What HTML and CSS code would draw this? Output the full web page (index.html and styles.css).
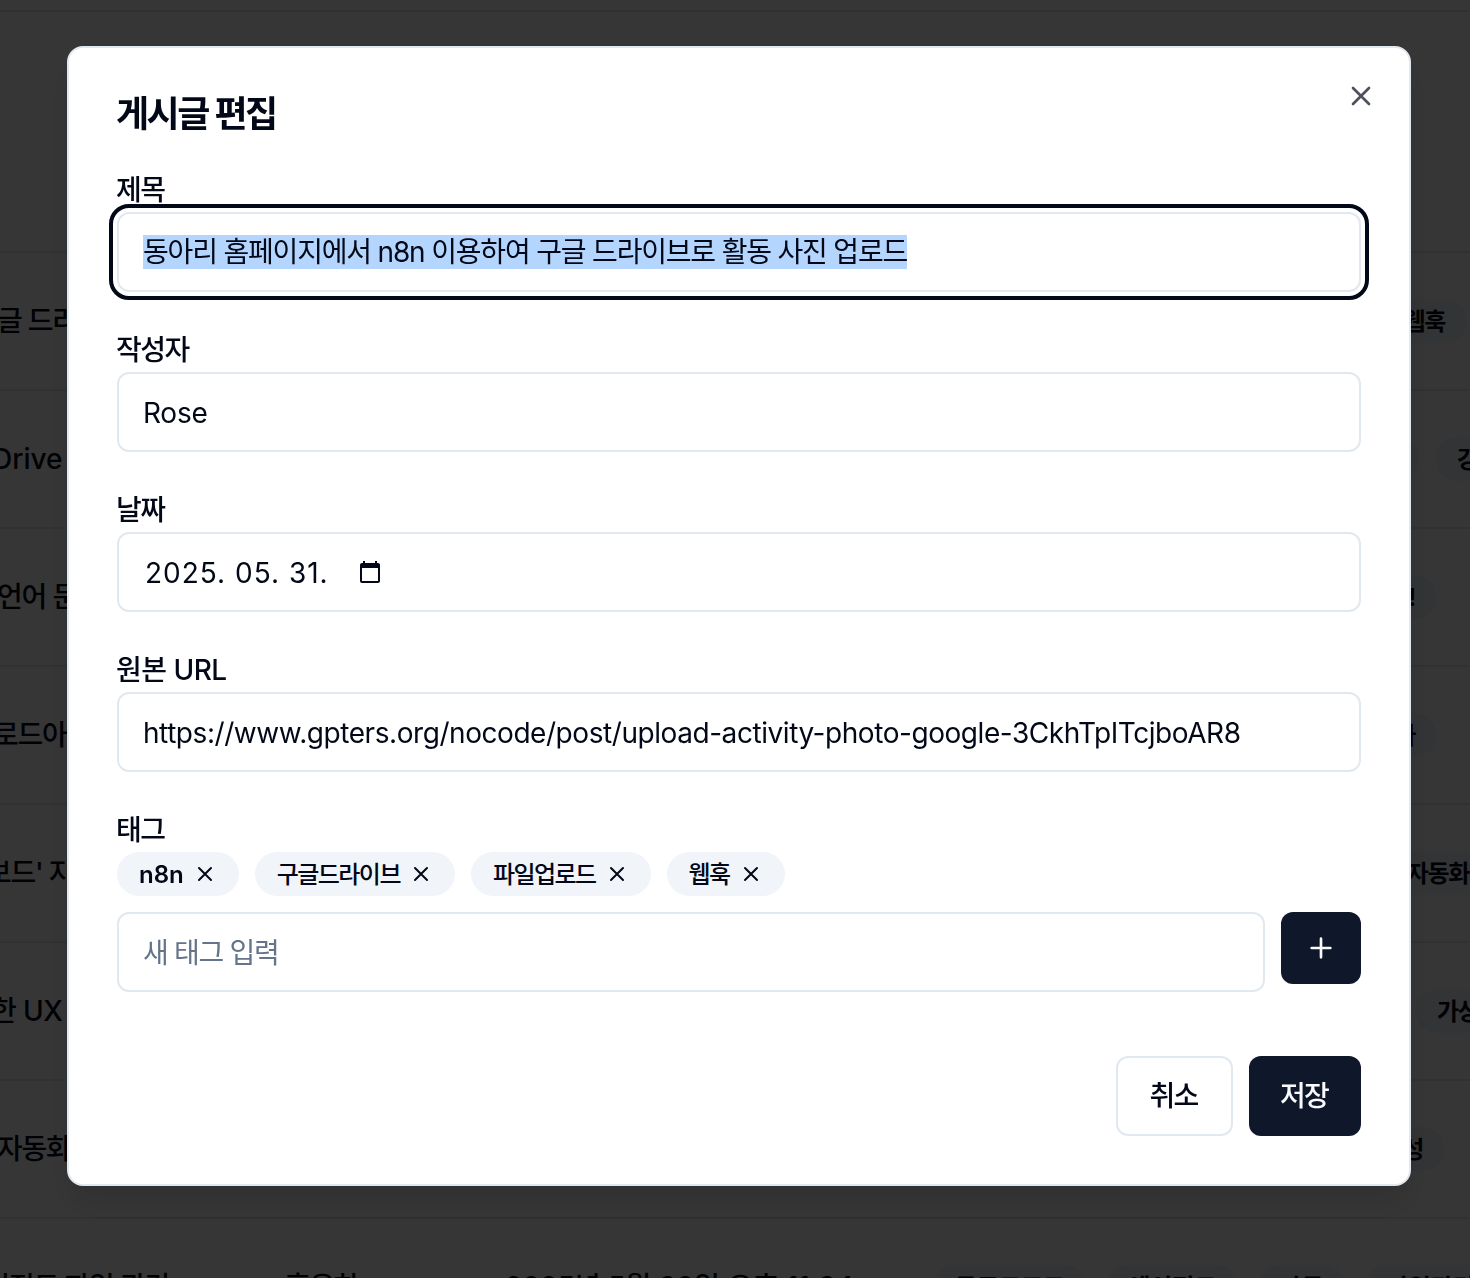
FILE: index.html
```html
<!DOCTYPE html>
<html lang="ko">
<head>
<meta charset="utf-8">
<title>게시글 편집</title>
<link rel="stylesheet" href="styles.css">
</head>
<body>
<main class="page">
  <div class="row row-top"></div>
  <div class="row row-tall"></div>
  <div class="row r2"><div class="t">글 드라이브로 활동 사진 업로드</div><div class="tags"><span class="pill">n8n</span><span class="pill">구글드라이브</span><span class="pill">파일업로드</span><span class="pill">웹훅</span></div></div>
  <div class="row r3"><div class="t">Drive 이미지 저장</div><div class="tags"><span class="pill">자동화</span><span class="pill">강의자료</span></div></div>
  <div class="row r4"><div class="t">언어 문서 정리</div><div class="tags"><span class="pill">프롬프트!</span></div></div>
  <div class="row r5"><div class="t">로드아웃 정리</div><div class="tags"><span class="pill">자료공유하</span></div></div>
  <div class="row r6"><div class="t">보드' 자동화</div><div class="tags"><span class="pill">자동화</span></div></div>
  <div class="row r7"><div class="t">한 UX 개선</div><div class="tags"><span class="pill">가상환경</span></div></div>
  <div class="row r8"><div class="t">자동화 구성</div><div class="tags"><span class="pill">에이전트 구성</span></div></div>
  <div class="row r9"><div class="t">에이전트 파일 관리</div><div class="author">홍은하</div><div class="date">2025년 5월 30일 오후 11:34</div><div class="tags"><span class="pill">클로드코드</span><span class="pill">에이전트</span><span class="pill">자동</span><span class="pill">파일관리</span></div></div>
</main>
<div class="overlay"></div>
<section class="modal" role="dialog" aria-label="게시글 편집">
  <h2 class="modal-title">게시글 편집</h2>
  <button class="close" aria-label="닫기"><svg viewBox="0 0 24 24" class="close-icon"><path d="M18 6 6 18M6 6l12 12"/></svg></button>
  <form class="form">
    <div class="field">
      <label class="label">제목</label>
      <div class="input focused" role="textbox"><span class="selected">동아리 홈페이지에서 n8n 이용하여 구글 드라이브로 활동 사진 업로드</span></div>
    </div>
    <div class="field">
      <label class="label">작성자</label>
      <input class="input latin-short" value="Rose">
    </div>
    <div class="field">
      <label class="label">날짜</label>
      <div class="input date-input" role="textbox"><span class="date-text">2025. 05. 31.</span><svg class="cal" viewBox="0 0 24 24"><path class="cal-fill" d="M20 3h-1V1h-2v2H7V1H5v2H4c-1.100 0-2 .9-2 2v16c0 1.100.9 2 2 2h16c1.100 0 2-.9 2-2V5c0-1.100-.9-2-2-2zm0 18H4V8h16v13z"/></svg></div>
    </div>
    <div class="field">
      <label class="label label-mixed">원본 URL</label>
      <input class="input latin-long" value="https://www.gpters.org/nocode/post/upload-activity-photo-google-3CkhTpITcjboAR8">
    </div>
    <div class="field">
      <label class="label">태그</label>
      <div class="tag-list">
        <span class="tag"><span class="tag-text tag-latin">n8n</span><svg viewBox="0 0 24 24" class="tag-x"><path d="M18 6 6 18M6 6l12 12"/></svg></span>
        <span class="tag"><span class="tag-text">구글드라이브</span><svg viewBox="0 0 24 24" class="tag-x"><path d="M18 6 6 18M6 6l12 12"/></svg></span>
        <span class="tag"><span class="tag-text">파일업로드</span><svg viewBox="0 0 24 24" class="tag-x"><path d="M18 6 6 18M6 6l12 12"/></svg></span>
        <span class="tag"><span class="tag-text">웹훅</span><svg viewBox="0 0 24 24" class="tag-x"><path d="M18 6 6 18M6 6l12 12"/></svg></span>
      </div>
      <div class="tag-add">
        <input class="input grow tag-input" placeholder="새 태그 입력">
        <button type="button" class="add" aria-label="추가"><svg viewBox="0 0 24 24" class="plus"><path d="M5 12h14M12 5v14"/></svg></button>
      </div>
    </div>
    <div class="actions">
      <button type="button" class="btn ghost">취소</button>
      <button type="button" class="btn primary">저장</button>
    </div>
  </form>
</section>
</body>
</html>
```
FILE: styles.css
```css
* { box-sizing: border-box; }
html, body { margin: 0; height: 100%; overflow: hidden; }
body { font-family: Inter, "Noto Sans CJK KR", sans-serif; background: #fff; color: #020817; }
.page { height: 1278px; overflow: hidden; }
.row { display: flex; align-items: center; height: 138px; border-bottom: 2px solid #e2e8f0; font-size: 28px; font-weight: 500; white-space: nowrap; }
.row-top { height: 12px; }
.row-tall { height: 241px; }
.t { width: 260px; flex: none; padding-bottom: 4px; letter-spacing: -1.2px; }
.r2 .t { margin-left: -3px; }
.r3 .t { margin-left: -8px; letter-spacing: 0; }
.r4 .t { margin-left: -3px; }
.r5 .t { margin-left: -7px; }
.r6 .t { margin-left: -14px; }
.r7 .t { margin-left: -9px; letter-spacing: -.6px; }
.r8 .t { margin-left: -3px; }
.r9 .t { margin-left: -40px; width: 325px; }
.author { width: 220px; flex: none; padding-bottom: 4px; letter-spacing: -1.2px; }
.date { flex: none; padding-bottom: 4px; }
.tags { margin-left: auto; display: flex; gap: 16px; flex: none; }
.r2 .tags { margin-right: 3px; }
.r3 .tags { margin-right: -92px; }
.r4 .tags { margin-right: 33px; }
.r5 .tags { margin-right: 33px; }
.r6 .tags { margin-right: -21px; }
.r7 .tags { margin-right: -72px; }
.r8 .tags { margin-right: 25px; }
.r9 .tags { margin-right: -27px; gap: 19px; }
.pill { display: flex; align-items: center; height: 44px; padding: 0 22px 3px; border-radius: 22px; background: #f1f5f9; font-size: 24px; font-weight: 600; letter-spacing: -1.3px; }
.r9 .pill { letter-spacing: 0; }
.overlay { position: fixed; inset: 0; background: rgba(0, 0, 0, .79); }
.modal { position: fixed; left: 67px; top: 46px; width: 1344px; height: 1140px; padding: 48px; background: #fff; border: 2px solid #e2e8f0; border-radius: 16px; box-shadow: 0 20px 30px rgba(0, 0, 0, .1); }
.modal-title { margin: 0 0 0 -1px; font-size: 36px; line-height: 36px; font-weight: 600; letter-spacing: -2.5px; color: #020817; }
.close { position: absolute; top: 32px; right: 32px; width: 32px; height: 32px; padding: 0; border: 0; background: none; opacity: .7; }
.close-icon { display: block; width: 32px; height: 32px; fill: none; stroke: #020817; stroke-width: 2; stroke-linecap: round; stroke-linejoin: round; }
.form { display: flex; flex-direction: column; gap: 32px; margin-top: 32px; }
.field { display: flex; flex-direction: column; gap: 8px; }
.label { display: block; height: 40px; margin-left: -1px; line-height: 53px; font-size: 28px; font-weight: 500; letter-spacing: -1.5px; }
.label-mixed { letter-spacing: -.5px; }
.input { display: block; width: 100%; height: 80px; padding: 0 24px; border: 2px solid #e2e8f0; border-radius: 12px; background: #fff; color: #020817; font: 400 28px Inter, "Noto Sans CJK KR", sans-serif; line-height: 76px; outline: 0; }
.latin-short { padding-top: 2px; letter-spacing: -.25px; }
.latin-long { padding-top: 2px; letter-spacing: -.44px; }
.tag-input { padding-top: 2px; letter-spacing: -1.3px; }
.input::placeholder { color: #64748b; opacity: 1; }
.focused { display: flex; align-items: center; outline: 4px solid #020817; outline-offset: 4px; }
.selected { line-height: 34px; background: #b4d5fe; white-space: nowrap; letter-spacing: -1.18px; }
.date-input { display: flex; align-items: center; padding-left: 26px; padding-top: 1px; }
.date-text { width: 213px; letter-spacing: 1px; }
.cal { width: 24px; height: 24px; margin-top: -1px; }
.cal-fill { fill: #020817; }
.tag-list { display: flex; gap: 16px; }
.tag { display: flex; align-items: center; gap: 9px; height: 44px; padding: 0 22px; border-radius: 22px; background: #f1f5f9; font-size: 24px; font-weight: 500; }
.tag-text { margin-top: -3px; letter-spacing: -1.55px; }
.tag-latin { margin-top: 0; letter-spacing: 0; font-weight: 600; }
.tag-x { width: 24px; height: 24px; fill: none; stroke: #020817; stroke-width: 2; stroke-linecap: round; stroke-linejoin: round; }
.tag-add { display: flex; gap: 16px; margin-top: 8px; align-items: flex-start; }
.grow { flex: 1; min-width: 0; }
.add { display: flex; align-items: center; justify-content: center; width: 80px; height: 72px; padding: 0; border: 0; border-radius: 12px; background: #0f172a; }
.plus { width: 32px; height: 32px; fill: none; stroke: #f8fafc; stroke-width: 2; stroke-linecap: round; }
.actions { display: flex; justify-content: flex-end; gap: 16px; margin-top: 32px; }
.btn { height: 80px; padding: 0 2px 4px 0; border-radius: 12px; font: 500 28px Inter, "Noto Sans CJK KR", sans-serif; letter-spacing: -1.75px; }
.ghost { width: 117px; background: #fff; border: 2px solid #e2e8f0; color: #020817; }
.primary { width: 112px; background: #0f172a; border: 0; color: #f8fafc; }
```
